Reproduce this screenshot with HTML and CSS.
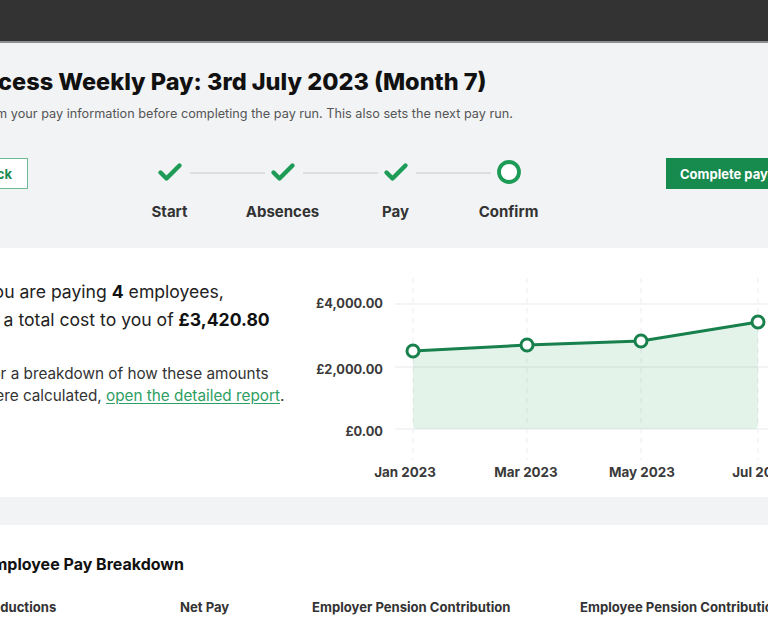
FILE: index.html
```html
<!DOCTYPE html>
<html lang="en">
<head>
<meta charset="utf-8">
<title>Process Weekly Pay</title>
<link rel="stylesheet" href="styles.css">
</head>
<body>
<header class="topbar"></header>
<main class="page">
  <section class="run-header">
    <div class="run-header__inner">
      <h1 class="run-header__title">Process Weekly Pay: 3rd July 2023 (Month 7)</h1>
      <p class="run-header__subtitle">Confirm your pay information before completing the pay run. This also sets the next pay run.</p>
      <div class="actions">
        <a class="btn btn--outline" href="#">Back</a>
        <ol class="stepper">
          <li class="step">
            <svg class="step__icon" viewBox="0 0 26 24"><path d="M3.5 12.5 L9.5 18.5 L22.5 5.5" fill="none" stroke="#1e9c57" stroke-width="4.4" stroke-linecap="round" stroke-linejoin="round"/></svg>
            <span class="step__label">Start</span>
          </li>
          <li class="step">
            <svg class="step__icon" viewBox="0 0 26 24"><path d="M3.5 12.5 L9.5 18.5 L22.5 5.5" fill="none" stroke="#1e9c57" stroke-width="4.4" stroke-linecap="round" stroke-linejoin="round"/></svg>
            <span class="step__label">Absences</span>
          </li>
          <li class="step">
            <svg class="step__icon" viewBox="0 0 26 24"><path d="M3.5 12.5 L9.5 18.5 L22.5 5.5" fill="none" stroke="#1e9c57" stroke-width="4.4" stroke-linecap="round" stroke-linejoin="round"/></svg>
            <span class="step__label">Pay</span>
          </li>
          <li class="step step--current">
            <svg class="step__icon" viewBox="0 0 26 24"><circle cx="13" cy="12" r="10" fill="#fff" stroke="#1e9c57" stroke-width="3.8"/></svg>
            <span class="step__label">Confirm</span>
          </li>
        </ol>
        <a class="btn btn--primary" href="#">Complete pay run</a>
      </div>
    </div>
  </section>

  <section class="card summary">
    <div class="summary__text">
      <p class="summary__lead">You are paying <strong>4</strong> employees,<br>at a total cost to you of <strong>£3,420.80</strong></p>
      <p class="summary__note">For a breakdown of how these amounts<br>were calculated, <a href="#">open the detailed report</a>.</p>
    </div>
    <svg class="chart" viewBox="0 0 520 220" width="520" height="220">
      <g class="chart__grid">
        <line x1="95" y1="34" x2="520" y2="34"/>
        <line x1="95" y1="97" x2="520" y2="97"/>
        <line x1="95" y1="159" x2="520" y2="159"/>
      </g>
      <g class="chart__vgrid">
        <line x1="113" y1="8" x2="113" y2="190"/>
        <line x1="227" y1="8" x2="227" y2="190"/>
        <line x1="341" y1="8" x2="341" y2="190"/>
        <line x1="458" y1="8" x2="458" y2="190"/>
      </g>
      <path class="chart__area" d="M113 81 L227 75 L341 71 L458 52 L458 155 Q458 159 454 159 L117 159 Q113 159 113 155 Z"/>
      <polyline class="chart__line" points="113,81 227,75 341,71 458,52"/>
      <g class="chart__dots">
        <circle cx="113" cy="81" r="6"/>
        <circle cx="227" cy="75" r="6"/>
        <circle cx="341" cy="71" r="6"/>
        <circle cx="458" cy="52" r="6"/>
      </g>
      <g class="chart__ylabels">
        <text x="83" y="33">£4,000.00</text>
        <text x="83" y="99">£2,000.00</text>
        <text x="83" y="161">£0.00</text>
      </g>
      <g class="chart__xlabels">
        <text x="105" y="202">Jan 2023</text>
        <text x="226" y="202">Mar 2023</text>
        <text x="342" y="202">May 2023</text>
        <text x="461" y="202">Jul 2023</text>
      </g>
    </svg>
  </section>

  <section class="card breakdown">
    <h2 class="breakdown__title">Employee Pay Breakdown</h2>
    <div class="breakdown__head">
      <span>Deductions</span>
      <span>Net Pay</span>
      <span>Employer Pension Contribution</span>
      <span>Employee Pension Contribution</span>
    </div>
  </section>
</main>
</body>
</html>
```

FILE: styles.css
```css
* { box-sizing: border-box; }

body {
  margin: 0;
  background: #f1f3f5;
  font-family: Inter, "Noto Sans", Arial, sans-serif;
  color: #222;
  overflow: hidden;
}

.topbar {
  height: 43px;
  background: #333;
  border-bottom: 2px solid #8e8e8e;
}

.page {
  width: 1000px;
  margin-left: -17px;
}

.run-header {
  height: 205px;
  padding-top: 23px;
}

.run-header__inner {
  margin-left: -24px;
}

.run-header__title {
  margin: 0;
  font-size: 23.5px;
  line-height: 32px;
  font-weight: 800;
  letter-spacing: 0;
  color: #111;
}

.run-header__subtitle {
  margin: 7px 0 0;
  font-size: 12.7px;
  line-height: 18px;
  color: #555;
}

.actions {
  display: flex;
  align-items: flex-start;
  margin-top: 35px;
}

.btn {
  height: 31px;
  display: inline-flex;
  align-items: center;
  font-size: 13px;
  font-weight: 700;
  text-decoration: none;
  white-space: nowrap;
  flex: none;
}

.btn--outline {
  width: 69px;
  justify-content: flex-end;
  padding: 0 15px;
  background: #fff;
  border: 1.5px solid #6dbb92;
  color: #1a8a50;
}

.btn--primary {
  margin-left: 101px;
  padding: 0 14px;
  background: #178a4e;
  color: #fff;
}

.stepper {
  display: flex;
  list-style: none;
  margin: 2px 0 0 85px;
  padding: 0;
  flex: none;
}

.step {
  position: relative;
  width: 113px;
  display: flex;
  flex-direction: column;
  align-items: center;
}

.step + .step::before {
  content: "";
  position: absolute;
  top: 12px;
  height: 2px;
  left: calc(-50% + 20px);
  right: calc(50% + 18px);
  background: #dcdfe2;
}

.step__icon {
  width: 26px;
  height: 24px;
  display: block;
}

.step__label {
  margin-top: 18px;
  font-size: 15px;
  line-height: 20px;
  font-weight: 700;
  color: #333;
}

.card {
  background: #fff;
}

.summary {
  display: flex;
  align-items: flex-start;
  height: 249px;
  padding-top: 22px;
}

.summary__text {
  width: 317px;
  flex: none;
  padding-top: 8px;
}

.summary__lead {
  margin: 0;
  font-size: 17.6px;
  line-height: 28px;
  color: #222;
}

.summary__lead strong {
  color: #111;
}

.summary__note {
  margin: 29px 0 0;
  font-size: 15.3px;
  line-height: 22px;
  color: #333;
}

.summary__note a {
  color: #2e9e62;
  text-decoration: underline;
  text-underline-offset: 2px;
}

.chart {
  display: block;
  flex: none;
}

.chart__grid line {
  stroke: #eef0f2;
  stroke-width: 1.5;
}

.chart__vgrid line {
  stroke: #f0f1f3;
  stroke-width: 1.2;
  stroke-dasharray: 5 5;
}

.chart__area {
  fill: rgba(40, 160, 95, 0.13);
}

.chart__line {
  fill: none;
  stroke: #17804d;
  stroke-width: 3;
  stroke-linejoin: round;
}

.chart__dots circle {
  fill: #fff;
  stroke: #17804d;
  stroke-width: 3;
}

.chart text {
  font-weight: 700;
  fill: #3a3a3a;
  dominant-baseline: central;
}

.chart__ylabels text {
  font-size: 12.8px;
  text-anchor: end;
}

.chart__xlabels text {
  font-size: 13.4px;
  text-anchor: middle;
}

.breakdown {
  margin-top: 28px;
  min-height: 300px;
  padding-top: 28px;
}

.breakdown__title {
  margin: 0;
  font-size: 16px;
  line-height: 22px;
  font-weight: 700;
  color: #111;
}

.breakdown__head {
  display: grid;
  grid-template-columns: 197px 132px 268px 1fr;
  margin-top: 23px;
  font-size: 13.1px;
  line-height: 18px;
  font-weight: 700;
  color: #333;
}
```
